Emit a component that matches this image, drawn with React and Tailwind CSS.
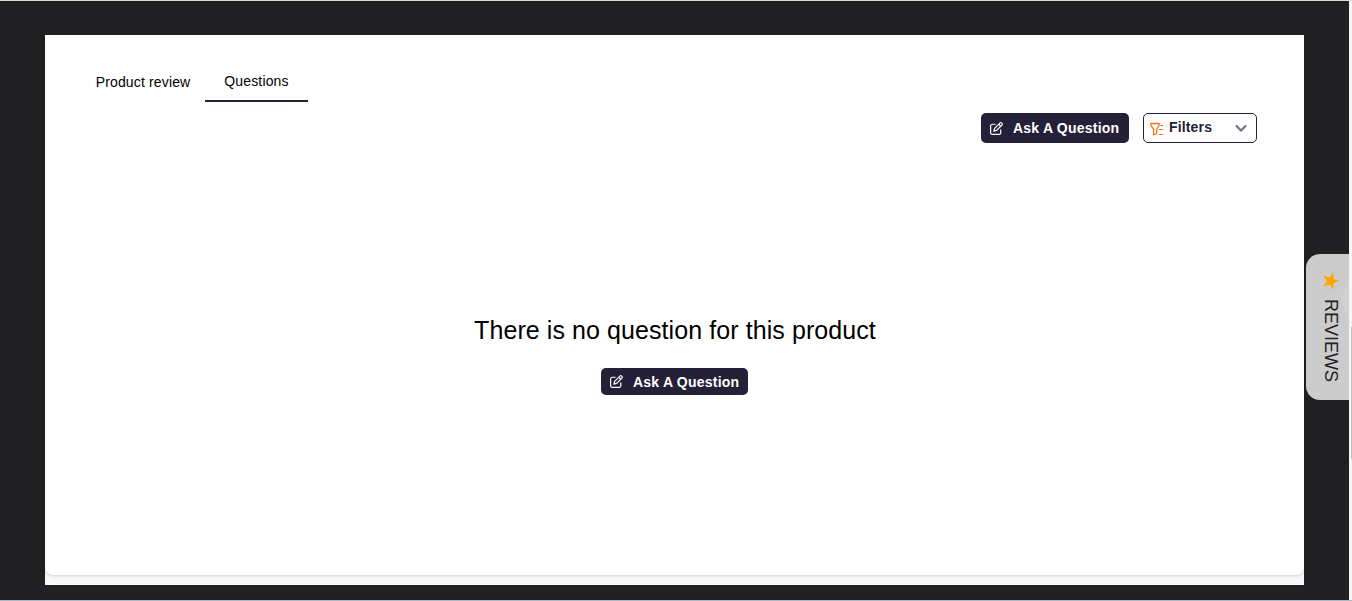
import { useState } from "react";
import { FaRegPenToSquare } from "react-icons/fa6";

function FilterIcon() {
  return (
    <svg viewBox="0 0 14 14" className="mt-px h-3.5 w-3.5 shrink-0" fill="none" stroke="#f97316" strokeWidth="1.3" strokeLinejoin="round">
      <path d="M.8 1.5h8.4v1.8L6.7 7v4.3L3.6 13V7L.8 3.3z" />
      <path d="M10.4 3.5h2.8M9.2 7.5h4M9.2 12.5h4" strokeWidth="1" />
    </svg>
  );
}

function AskButton({ className }) {
  return (
    <button className={`flex items-center rounded-[5px] bg-[#242038] pl-[9px] text-sm font-bold text-white ${className}`}>
      <FaRegPenToSquare className="h-[13px] w-[13px] shrink-0" />
      <span className="ml-2.5 whitespace-nowrap tracking-[0.22px]">Ask A Question</span>
    </button>
  );
}

function App() {
  const [tab, setTab] = useState("questions");

  return (
    <div className="relative flex h-[601px] w-full overflow-hidden border-t border-[#d5dcd8] bg-[#f5f5f5] font-['Liberation_Sans',Arial,sans-serif] text-black">
      <main className="h-[599px] w-[1349px] bg-[#202022] pt-[34px] pl-[45px]">
        <div className="h-[550px] w-[1259px] bg-[#f8f8f8]">
          <section className="flex h-[540px] flex-col rounded-b-lg bg-white shadow-[0_1px_3px_rgba(0,0,0,0.16)]">
            <nav className="flex h-[67px] shrink-0 pl-[37px] text-sm">
              <button
                onClick={() => setTab("reviews")}
                className={`flex w-[123px] items-end justify-center pr-px pb-2.5 ${tab === "reviews" ? "border-b-2 border-[#242038]" : ""}`}
              >
                <span className="tracking-[0.15px]">Product review</span>
              </button>
              <button
                onClick={() => setTab("questions")}
                className={`flex w-[103px] items-end justify-center pb-[9px] ${tab === "questions" ? "border-b-2 border-[#242038]" : ""}`}
              >
                <span className="tracking-[0.15px]">Questions</span>
              </button>
            </nav>
            <div className="mt-[11px] flex shrink-0 justify-end gap-3.5 pr-[47px]">
              <AskButton className="h-[30px] w-[148px]" />
              <button className="flex h-[30px] w-[114px] items-center rounded-[5px] border border-[#242038] pr-[8.5px] pl-[6px] text-sm font-bold text-[#242038]">
                <FilterIcon />
                <span className="mb-0.5 ml-[5px] tracking-[0.15px]">Filters</span>
                <svg viewBox="0 0 14 10" className="ml-auto h-2.5 w-3.5" fill="none" stroke="#6b7280" strokeWidth="2.2">
                  <path d="M2 2.5l5 5 5-5" />
                </svg>
              </button>
            </div>
            <div className="mt-[171px] flex flex-col items-center">
              <h2 className="pl-px text-[25px] leading-8 tracking-[0.08px]">There is no question for this product</h2>
              <AskButton className="mt-[22px] h-[27px] w-[147px]" />
            </div>
          </section>
        </div>
      </main>
      <button className="absolute top-[253px] left-[1306px] flex h-[146px] w-[43px] flex-col items-center overflow-hidden rounded-l-[14px] bg-[#cccccc] pt-[18px] pl-[6px]">
        <span className="absolute top-[24px] left-[36px] h-[44px] w-[44px] rounded-full bg-[#d1d1d1]" />
        <svg viewBox="0 0 18 18" className="relative h-[18px] w-[18px] rotate-90" fill="#ffa500">
          <path d="M9 .2l2 6.3h6.7l-5.3 3.9 2.1 6.7L9 13l-5.5 4.1 2.1-6.7L.3 6.5H7z" />
        </svg>
        <span className="mt-[9px] text-lg leading-6 text-[#222] [writing-mode:vertical-rl]">REVIEWS</span>
      </button>
      <div className="absolute top-[326px] right-0 h-[132px] w-px bg-[#c1c1c1]" />
      <div className="absolute bottom-0 left-0 h-px w-full bg-[#aeb9c3]" />
    </div>
  );
}

export default App;
